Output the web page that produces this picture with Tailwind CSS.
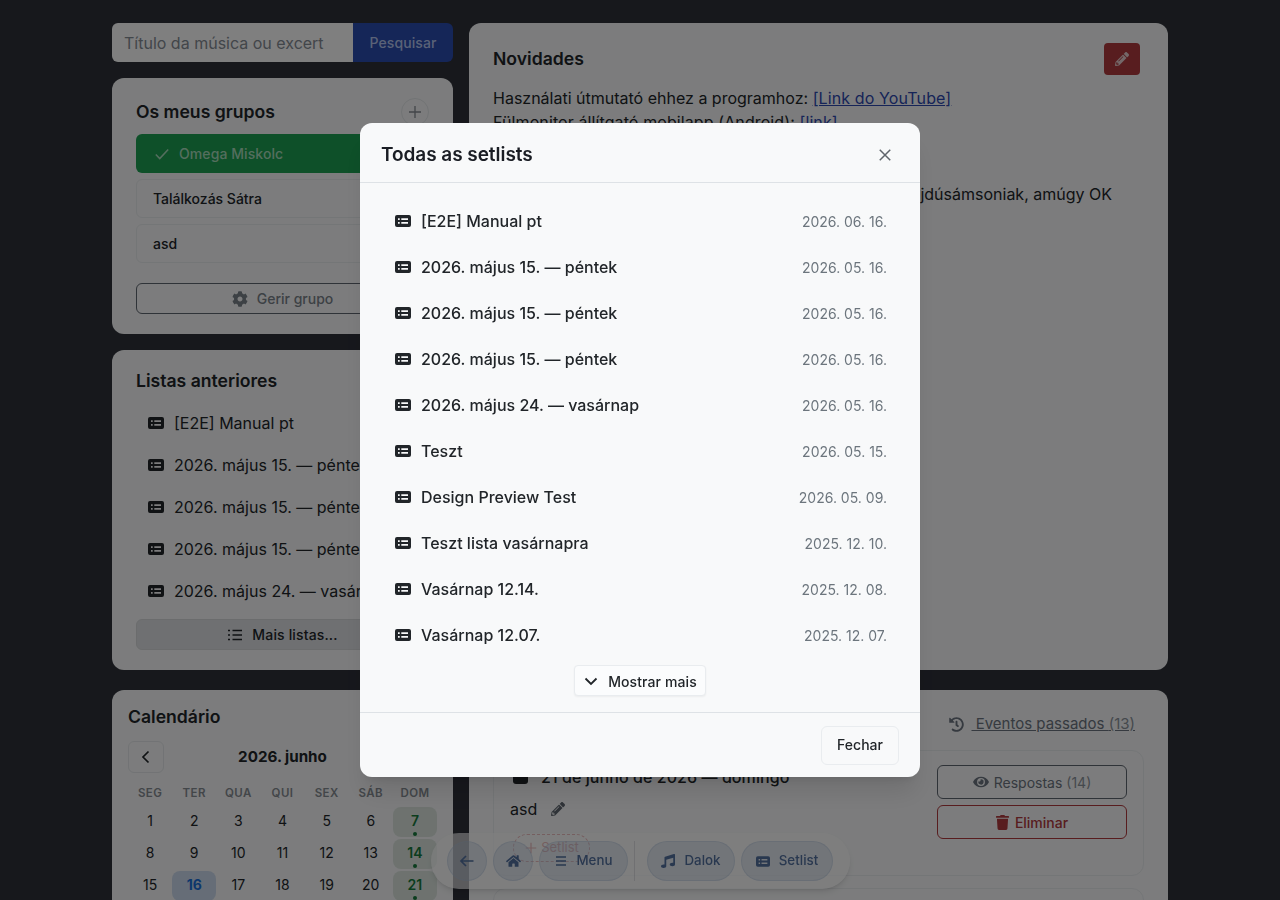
<!DOCTYPE html>
<html lang="pt">
<head>
  <meta charset="UTF-8" />
  <meta name="viewport" content="width=device-width, initial-scale=1.0" />
  <title>Todas as setlists</title>
  <script src="https://cdn.jsdelivr.net/npm/@tailwindcss/browser@4"></script>
</head>
<body class="bg-[#2e3039] h-[900px] overflow-hidden font-['Inter','Liberation_Sans',sans-serif] text-[#212529]">
  <div class="w-[1056px] h-[900px] overflow-hidden ml-[112px] pt-[23px] flex gap-4 items-start">

    <!-- coluna esquerda -->
    <div class="w-[341px] shrink-0 flex flex-col">
      <div class="flex h-[39px]">
        <div class="w-[241px] bg-[#fff] rounded-l-md px-3 flex items-center text-[16px] text-[#858c94] whitespace-nowrap overflow-hidden">Título da música ou excert</div>
        <div class="flex-1 bg-[#2a4cb0] rounded-r-md flex items-center justify-center text-[14px] font-medium tracking-[0.1px] text-[#b4c4ee]">Pesquisar</div>
      </div>

      <div class="mt-4 h-[256px] bg-[#f8f9fa] rounded-xl px-6 pt-[20px]">
        <div class="flex items-center justify-between h-[28px]">
          <h2 class="text-[17.6px] font-semibold">Os meus grupos</h2>
          <div class="w-[28px] h-[28px] rounded-full border border-[#e4e7ea] flex items-center justify-center text-[#868c93]">
            <svg class="w-4 h-4" viewBox="0 0 16 16" fill="none" stroke="currentColor" stroke-width="1.3"><path d="M8 2v12M2 8h12" /></svg>
          </div>
        </div>
        <div class="mt-[8px] h-[39px] bg-[#1ca052] rounded-md flex items-center px-[17px] gap-[8px] text-[14px] font-medium tracking-[0.08px] text-[#a8dcbc]">
          <svg class="w-[18px] h-[18px]" viewBox="0 0 16 16" fill="none" stroke="currentColor" stroke-width="1.4"><path d="M2.5 8.5l3.5 3.5 7.5-8" /></svg>
          Omega Miskolc
        </div>
        <div class="mt-[6px] h-[39px] border border-[#e9ecef] rounded-md flex items-center px-4 text-[14px] font-medium">Találkozás Sátra</div>
        <div class="mt-[6px] h-[39px] border border-[#e9ecef] rounded-md flex items-center px-4 text-[14px] font-medium">asd</div>
        <div class="mt-5 h-[31px] border border-[#5f6670] rounded-md flex items-center justify-center gap-[9px] text-[14px] font-medium text-[#7a828a]">
          <svg class="w-4 h-4" viewBox="0 0 512 512" fill="currentColor"><path d="M487.4 315.7l-42.6-24.6c4.3-23.2 4.3-47 0-70.2l42.6-24.6c4.9-2.8 7.1-8.6 5.5-14-11.1-35.6-30-67.8-54.7-94.6-3.8-4.1-10-5.1-14.8-2.3L380.8 110c-17.9-15.4-38.5-27.3-60.8-35.1V25.8c0-5.6-3.9-10.5-9.4-11.7-36.7-8.2-74.3-7.8-109.2 0-5.5 1.2-9.4 6.1-9.4 11.7V75c-22.2 7.9-42.8 19.8-60.8 35.1L88.7 85.5c-4.9-2.8-11-1.9-14.8 2.3-24.7 26.7-43.6 58.9-54.7 94.6-1.7 5.4.6 11.2 5.5 14L67.3 221c-4.3 23.2-4.3 47 0 70.2l-42.6 24.6c-4.9 2.8-7.1 8.6-5.5 14 11.1 35.6 30 67.8 54.7 94.6 3.8 4.1 10 5.1 14.8 2.3l42.6-24.6c17.9 15.4 38.5 27.3 60.8 35.1v49.2c0 5.6 3.9 10.5 9.4 11.7 36.7 8.2 74.3 7.8 109.2 0 5.5-1.2 9.4-6.1 9.4-11.7v-49.2c22.2-7.9 42.8-19.8 60.8-35.1l42.6 24.6c4.9 2.8 11 1.9 14.8-2.3 24.7-26.7 43.6-58.9 54.7-94.6 1.5-5.5-.7-11.3-5.6-14.1zM256 336c-44.1 0-80-35.9-80-80s35.9-80 80-80 80 35.9 80 80-35.9 80-80 80z" /></svg>
          Gerir grupo
        </div>
      </div>

      <div class="mt-4 h-[320px] bg-[#f8f9fa] rounded-xl px-6 pt-[19px]">
        <h2 class="text-[17.6px] font-semibold h-[24px] flex items-center">Listas anteriores</h2>
        <div id="prevList" class="mt-[9px] flex flex-col"></div>
        <div class="mt-[7px] h-[31px] bg-[#dfe1e4] border border-[#d6d8db] rounded-md flex items-center justify-center gap-[9px] text-[14px] font-medium tracking-[0.15px]">
          <svg class="w-4 h-4" viewBox="0 0 16 16" fill="none" stroke="currentColor" stroke-width="1.6"><path d="M5.5 3.5H15M5.5 8H15M5.5 12.5H15M1 3.5h2M1 8h2M1 12.5h2" /></svg>
          Mais listas...
        </div>
      </div>

      <div class="mt-5 h-[210px] overflow-hidden bg-[#f8f9fa] rounded-t-xl px-4 pt-[16px]">
        <h2 class="text-[17.6px] font-semibold h-[22px] flex items-center">Calendário</h2>
        <div class="mt-[13px] flex items-center justify-between h-[32px]">
          <div class="w-[36px] h-[32px] border border-[#e4e7ea] rounded-md flex items-center justify-center">
            <svg class="w-4 h-4" viewBox="0 0 16 16" fill="none" stroke="currentColor" stroke-width="1.7"><path d="M10.5 2.5L5 8l5.5 5.5" /></svg>
          </div>
          <div class="text-[15.2px] font-bold">2026. junho</div>
          <div class="w-[36px] h-[32px] border border-[#e4e7ea] rounded-md"></div>
        </div>
        <div class="mt-[10px] grid grid-cols-7 text-center text-[11.5px] font-semibold tracking-[0.4px] text-[#868c93] h-[22px] items-center">
          <div>SEG</div><div>TER</div><div>QUA</div><div>QUI</div><div>SEX</div><div>SÁB</div><div>DOM</div>
        </div>
        <div id="calGrid" class="grid grid-cols-7 text-center text-[14px]"></div>
      </div>
    </div>

    <!-- coluna direita -->
    <div class="flex-1 flex flex-col">
      <div class="h-[647px] bg-[#f8f9fa] rounded-xl px-6 pt-5">
        <div class="flex items-start justify-between pr-[4px]">
          <h2 class="text-[17.6px] font-semibold h-[32px] flex items-center">Novidades</h2>
          <div class="w-[36px] h-[32px] bg-[#b03a3e] rounded-[4px] flex items-center justify-center text-[#e8d0d2]">
            <svg class="w-[14px] h-[14px]" viewBox="0 0 512 512" fill="currentColor"><path d="M497.9 142.1l-46.1 46.1c-4.7 4.7-12.3 4.7-17 0l-111-111c-4.7-4.7-4.7-12.3 0-17l46.1-46.1c18.7-18.7 49.1-18.7 67.9 0l60.1 60.1c18.8 18.7 18.8 49.1 0 67.9zM284.2 99.8L21.6 362.4.4 483.9c-2.9 16.4 11.4 30.6 27.8 27.8l121.5-21.3 262.6-262.6c4.7-4.7 4.7-12.3 0-17l-111-111c-4.8-4.7-12.4-4.7-17.1 0zM124.1 339.9c-5.5-5.5-5.5-14.3 0-19.8l154-154c5.5-5.5 14.3-5.5 19.8 0s5.5 14.3 0 19.8l-154 154c-5.5 5.5-14.3 5.5-19.8 0zM88 424h48v36.3l-64.5 11.3-31.1-31.1L51.7 376H88v48z" /></svg>
          </div>
        </div>
        <div class="mt-[11px] text-[16px] leading-[24px]">
          <div>Használati útmutató ehhez a programhoz: <span class="underline tracking-[0.12px] text-[#2d48b0]">[Link do YouTube]</span></div>
          <div class="tracking-[0.1px]">Fülmonitor állítgató mobilapp (Android): <span class="underline text-[#2d48b0]">[link]</span></div>
          <div class="h-[48px]"></div>
          <div class="w-[619px] text-right whitespace-nowrap">Teszteltem, kicsit nehezen megy a hajdúsámsoniak, amúgy OK</div>
        </div>
      </div>

      <div class="mt-5 h-[210px] overflow-hidden bg-[#f8f9fa] rounded-t-xl px-6 pt-[24px]">
        <div class="flex justify-end items-center h-[20px] pr-[9px] gap-[7px] text-[15px] text-[#6c7480]">
          <svg class="w-[15px] h-[15px]" viewBox="0 0 512 512" fill="currentColor"><path d="M504 255.531c.253 136.64-111.18 248.372-247.82 248.468-59.015.042-113.223-20.53-155.822-54.911-11.077-8.94-11.905-25.541-1.839-35.607l11.267-11.267c8.609-8.609 22.353-9.551 31.891-1.984C173.062 425.135 212.781 440 256 440c101.705 0 184-82.311 184-184 0-101.705-82.311-184-184-184-48.814 0-93.149 18.969-126.068 49.932l50.754 50.754c10.08 10.08 2.941 27.314-11.313 27.314H24c-8.837 0-16-7.163-16-16V38.627c0-14.254 17.234-21.393 27.314-11.314l49.372 49.372C129.209 34.136 189.552 8 256 8c136.81 0 247.747 110.78 248 247.531zm-180.912 78.784l9.823-12.63c8.138-10.463 6.253-25.542-4.21-33.679L288 256.349V152c0-13.255-10.745-24-24-24h-16c-13.255 0-24 10.745-24 24v135.651l65.409 50.874c10.463 8.137 25.541 6.253 33.679-4.21z" /></svg>
          <span class="underline whitespace-pre"> Eventos passados <span class="text-[#8b929a]">(13)</span></span>
        </div>
        <div class="mt-[16px] h-[126px] border border-[#e9ecef] rounded-xl pl-4 pr-4 pt-[13px] flex justify-between">
          <div>
            <div class="flex items-center gap-[13px] pl-[3px] text-[16px] font-medium tracking-[0.07px] h-[25px]">
              <span class="w-[15px] h-[15px] rounded-[3px] bg-[#212529]"></span>
              21 de junho de 2026 — domingo
            </div>
            <div class="mt-[8px] flex items-center gap-[14px] text-[16px] h-[24px]">
              asd
              <svg class="w-[14px] h-[14px] text-[#5f6670]" viewBox="0 0 512 512" fill="currentColor"><path d="M497.9 142.1l-46.1 46.1c-4.7 4.7-12.3 4.7-17 0l-111-111c-4.7-4.7-4.7-12.3 0-17l46.1-46.1c18.7-18.7 49.1-18.7 67.9 0l60.1 60.1c18.8 18.7 18.8 49.1 0 67.9zM284.2 99.8L21.6 362.4.4 483.9c-2.9 16.4 11.4 30.6 27.8 27.8l121.5-21.3 262.6-262.6c4.7-4.7 4.7-12.3 0-17l-111-111c-4.8-4.7-12.4-4.7-17.1 0zM124.1 339.9c-5.5-5.5-5.5-14.3 0-19.8l154-154c5.5-5.5 14.3-5.5 19.8 0s5.5 14.3 0 19.8l-154 154c-5.5 5.5-14.3 5.5-19.8 0zM88 424h48v36.3l-64.5 11.3-31.1-31.1L51.7 376H88v48z" /></svg>
            </div>
            <div class="mt-[13px] ml-[3px] w-[77px] h-[28px] border border-dashed border-[#c24045] rounded-full flex items-center justify-center gap-[3px] text-[13px] text-[#c24045]">
              <svg class="w-[14px] h-[14px]" viewBox="0 0 16 16" fill="none" stroke="currentColor" stroke-width="1.4"><path d="M8 2v12M2 8h12" /></svg>
              Setlist
            </div>
          </div>
          <div class="mt-px w-[190px] flex flex-col gap-[6px]">
            <div class="h-[34px] border border-[#5f6670] rounded-md flex items-center justify-center gap-[5px] text-[14px] text-[#6c7480]">
              <svg class="w-[16px] h-[14px]" viewBox="0 0 576 512" fill="currentColor"><path d="M572.52 241.4C518.29 135.59 410.93 64 288 64S57.68 135.64 3.48 241.41a32.35 32.35 0 0 0 0 29.19C57.71 376.41 165.07 448 288 448s230.32-71.64 284.52-177.41a32.35 32.35 0 0 0 0-29.19zM288 400a144 144 0 1 1 144-144 143.93 143.93 0 0 1-144 144zm0-240a95.31 95.31 0 0 0-25.31 3.79 47.85 47.85 0 0 1-66.9 66.9A95.78 95.78 0 1 0 288 160z" /></svg>
              <span>Respostas <span class="text-[#8b929a]">(14)</span></span>
            </div>
            <div class="h-[34px] border border-[#b03a3e] rounded-md flex items-center justify-center gap-[6px] text-[14px] font-medium text-[#b03a3e]">
              <svg class="w-[13px] h-[15px]" viewBox="0 0 448 512" fill="currentColor"><path d="M432 32H312l-9.4-18.7A24 24 0 0 0 281.1 0H166.8a23.72 23.72 0 0 0-21.4 13.3L136 32H16A16 16 0 0 0 0 48v32a16 16 0 0 0 16 16h416a16 16 0 0 0 16-16V48a16 16 0 0 0-16-16zM53.2 467a48 48 0 0 0 47.9 45h245.8a48 48 0 0 0 47.9-45L416 128H32z" /></svg>
              Eliminar
            </div>
          </div>
        </div>
        <div class="mt-3 h-[60px] border border-[#e9ecef] rounded-xl"></div>
      </div>
    </div>
  </div>

  <!-- barra de navegação inferior -->
  <div class="fixed left-[431px] top-[833px] w-[419px] h-[56px] rounded-full bg-white/65 backdrop-blur-[0.5px] shadow-md flex items-center pl-[16px] gap-[6px] text-[13.3px] font-medium tracking-[0.05px] text-[#52709f]">
    <div class="w-[40px] h-[40px] rounded-full bg-[#a8bcd8]/30 border border-[#a8bcd8]/30 flex items-center justify-center">
      <svg class="w-4 h-4" viewBox="0 0 16 16" fill="none" stroke="currentColor" stroke-width="1.7"><path d="M14.5 8H2M7 3L2 8l5 5" /></svg>
    </div>
    <div class="w-[40px] h-[40px] rounded-full bg-[#a8bcd8]/30 border border-[#a8bcd8]/30 flex items-center justify-center">
      <svg class="w-[15px] h-[14px]" viewBox="0 0 576 512" fill="currentColor"><path d="M280.37 148.26L96 300.11V464a16 16 0 0 0 16 16l112.06-.29a16 16 0 0 0 15.92-16V368a16 16 0 0 1 16-16h64a16 16 0 0 1 16 16v95.64a16 16 0 0 0 16 16.05L464 480a16 16 0 0 0 16-16V300L295.67 148.26a12.19 12.19 0 0 0-15.3 0zM571.6 251.47L488 182.56V44.05a12 12 0 0 0-12-12h-56a12 12 0 0 0-12 12v72.61L318.47 43a48 48 0 0 0-61 0L4.34 251.47a12 12 0 0 0-1.6 16.9l25.5 31A12 12 0 0 0 45.15 301l235.22-193.74a12.19 12.19 0 0 1 15.3 0L530.9 301a12 12 0 0 0 16.9-1.6l25.5-31a12 12 0 0 0-1.7-16.93z" /></svg>
    </div>
    <div class="w-[89px] h-[40px] rounded-full bg-[#a8bcd8]/30 border border-[#a8bcd8]/30 flex items-center justify-center gap-[8px]">
      <svg class="w-[14px] h-[14px]" viewBox="0 0 14 14" fill="none" stroke="currentColor" stroke-width="1.5"><path d="M2 3h10M2 7h10M2 11h10" /></svg>
      Menu
    </div>
    <div class="w-px h-[40px] bg-[#9aa0a8]/30"></div>
    <div class="ml-[6px] w-[88px] h-[40px] rounded-full bg-[#a8bcd8]/30 border border-[#a8bcd8]/30 flex items-center justify-center gap-[9px]">
      <svg class="w-[14px] h-[14px]" viewBox="0 0 512 512" fill="currentColor"><path d="M470.38 1.51L150.41 96A32 32 0 0 0 128 126.51v261.41A139 139 0 0 0 96 384c-53 0-96 28.66-96 64s43 64 96 64 96-28.66 96-64V214.32l256-75v184.61a138.4 138.4 0 0 0-32-3.93c-53 0-96 28.66-96 64s43 64 96 64 96-28.65 96-64V32a32 32 0 0 0-41.62-30.49z" /></svg>
      Dalok
    </div>
    <div class="w-[92px] h-[40px] rounded-full bg-[#a8bcd8]/30 border border-[#a8bcd8]/30 flex items-center justify-center gap-[9px]">
      <svg class="w-[14px] h-[11px]" viewBox="0 0 16 12" fill="currentColor" fill-rule="evenodd"><path d="M2 0h12a2 2 0 0 1 2 2v8a2 2 0 0 1-2 2H2a2 2 0 0 1-2-2V2a2 2 0 0 1 2-2zM3 3.2v1.7h1.7V3.2zM3 7.1v1.7h1.7V7.1zM6.3 3.2v1.7H13V3.2zM6.3 7.1v1.7H13V7.1z" /></svg>
      Setlist
    </div>
  </div>

  <!-- modal -->
  <div class="fixed inset-0 bg-black/50"></div>
  <div class="fixed left-[360px] top-[123px] w-[560px] h-[654px] bg-[#f8f9fa] rounded-xl shadow-xl flex flex-col">
    <div class="h-[60px] shrink-0 pt-[4px] border-b border-[#dee2e6] flex items-center justify-between pl-[21px] pr-[28px]">
      <h2 class="mt-[2px] text-[19px] font-semibold tracking-[-0.05px] text-[#1a1d24]">Todas as setlists</h2>
      <svg class="w-[14px] h-[14px] text-[#5f646b]" viewBox="0 0 16 16" fill="none" stroke="currentColor" stroke-width="1.7"><path d="M2 2l12 12M14 2L2 14" /></svg>
    </div>
    <div class="flex-1 pt-[15px] flex flex-col">
      <div id="modalList" class="flex flex-col pl-[35px] pr-[33px]"></div>
      <div class="mt-[7px] self-center w-[132px] h-[31px] pt-[1px] bg-[#fbfcfd] border border-[#e9ecef] rounded-[4px] shadow-xs flex items-center justify-center gap-[9px] text-[14px] font-medium tracking-[0.1px] text-[#212529]">
        <svg class="w-4 h-4" viewBox="0 0 16 16" fill="none" stroke="currentColor" stroke-width="1.8"><path d="M2.5 5.5L8 11l5.5-5.5" /></svg>
        Mostrar mais
      </div>
    </div>
    <div class="h-[65px] shrink-0 border-t border-[#dee2e6] flex items-center justify-end pr-[21px]">
      <div class="w-[78px] h-[39px] pb-[1px] border border-[#e9ecef] rounded-md flex items-center justify-center text-[14px] font-medium text-[#212529]">Fechar</div>
    </div>
  </div>

  <script>
    const CARD_ICON = '<svg class="w-4 h-3 shrink-0" viewBox="0 0 16 12" fill="currentColor" fill-rule="evenodd"><path d="M2 0h12a2 2 0 0 1 2 2v8a2 2 0 0 1-2 2H2a2 2 0 0 1-2-2V2a2 2 0 0 1 2-2zM3 3.2v1.7h1.7V3.2zM3 7.1v1.7h1.7V7.1zM6.3 3.2v1.7H13V3.2zM6.3 7.1v1.7H13V7.1z"/></svg>';

    const setlists = [
      ["[E2E] Manual pt", "2026. 06. 16."],
      ["2026. május 15. — péntek", "2026. 05. 16."],
      ["2026. május 15. — péntek", "2026. 05. 16."],
      ["2026. május 15. — péntek", "2026. 05. 16."],
      ["2026. május 24. — vasárnap", "2026. 05. 16."],
      ["Teszt", "2026. 05. 15."],
      ["Design Preview Test", "2026. 05. 09."],
      ["Teszt lista vasárnapra", "2025. 12. 10."],
      ["Vasárnap 12.14.", "2025. 12. 08."],
      ["Vasárnap 12.07.", "2025. 12. 07."]
    ];

    document.getElementById("modalList").innerHTML = setlists.map(([name, date]) => `
      <div class="h-[46px] flex items-center justify-between">
        <div class="flex items-center gap-[10px] text-[16px] font-medium text-[#212529]">${CARD_ICON}<span>${name}</span></div>
        <div class="text-[14px] text-[#6c757d]">${date}</div>
      </div>`).join("");

    document.getElementById("prevList").innerHTML = setlists.slice(0, 5).map(([name]) => `
      <div class="h-[42px] flex items-center gap-[10px] pl-3 text-[16px] whitespace-nowrap">${CARD_ICON}<span>${name}</span></div>`).join("");

    // calendário de junho de 2026
    let cells = "";
    for (let d = 1; d <= 21; d++) {
      let cls = "h-[30px] mt-[2px] relative leading-[28px] rounded-lg";
      if (d % 7 === 0) cls += " bg-[#dce5df] text-[#167a3c] font-semibold";
      if (d === 16) cls += " bg-[#cddbee] text-[#1a6fd8] font-bold";
      const dot = d % 7 === 0 ? '<span class="absolute left-1/2 bottom-[1px] -ml-[2px] w-1 h-1 rounded-full bg-[#167a3c]"></span>' : "";
      cells += `<div class="${cls}">${d}${dot}</div>`;
    }
    document.getElementById("calGrid").innerHTML = cells;
  </script>
</body>
</html>
